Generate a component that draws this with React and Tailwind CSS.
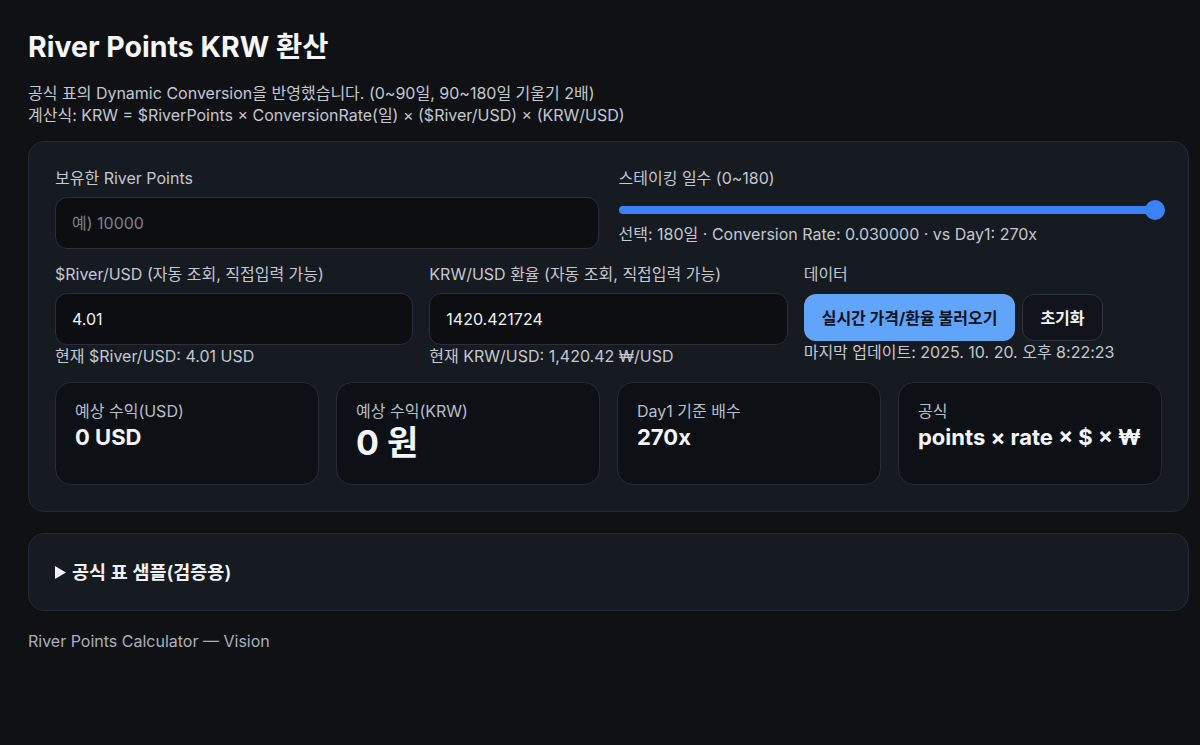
import React, { useState } from "react";

const FONT = { fontFamily: 'Inter, "Noto Sans CJK KR", "Noto Sans", sans-serif' };

function Stat({ label, value, big }) {
  return (
    <div className="h-[103px] rounded-2xl border border-[#262b35] bg-[#0d1015] px-[19px] pt-[18px]">
      <div className="text-[16px] leading-5 text-[#b9bfc9]">{label}</div>
      <div className={big ? "mt-[2px] text-[34px] font-bold leading-[40px] text-[#f3f5f8]" : "mt-[2px] text-[22px] font-bold leading-7 text-[#f3f5f8]"}>
        {value}
      </div>
    </div>
  );
}

export default function App() {
  const [points, setPoints] = useState("");
  const [river, setRiver] = useState("4.01");
  const [krw, setKrw] = useState("1420.421724");

  return (
    <div style={FONT} className="min-h-[745px] bg-[#0f1115] pl-7 pr-[11px] pt-[29px] text-[#e6e8ec]">
      <h1 className="text-[28.5px] font-bold leading-9 text-[#f4f6f8]">River Points KRW 환산</h1>
      <p className="mt-[17px] text-[16px] leading-[22px] text-[#c3c8d1]">
        공식 표의 Dynamic Conversion을 반영했습니다. (0~90일, 90~180일 기울기 2배)
        <br />
        계산식: KRW = $RiverPoints × ConversionRate(일) × ($River/USD) × (KRW/USD)
      </p>

      <div className="mt-[15px] rounded-2xl border border-[#232833] bg-[#161a21] px-[26px] pt-[26px] pb-[26px]">
        <div className="grid grid-cols-2 gap-5">
          <div>
            <label className="block text-[16px] leading-5 text-[#c3c8d1]">보유한 River Points</label>
            <input
              value={points}
              onChange={(e) => setPoints(e.target.value)}
              placeholder="예) 10000"
              className="mt-[9px] h-[52px] w-full rounded-xl border border-[#2a2f39] bg-[#0c0e12] px-4 text-[16px] text-[#e6e8ec] outline-none placeholder:text-[#7b818b]"
            />
          </div>
          <div>
            <label className="block text-[16px] leading-5 text-[#c3c8d1]">스테이킹 일수 (0~180)</label>
            <div className="relative -mr-[3px] mt-[11px] h-[22px]">
              <div className="absolute left-0 right-[1px] top-[7px] h-2 rounded-full bg-[#3b82f6]" />
              <div className="absolute right-0 top-[1px] h-5 w-5 rounded-full bg-[#3b82f6]" />
            </div>
            <div className="mt-[3px] text-[16px] leading-5 text-[#c3c8d1]">
              선택: 180일 · Conversion Rate: 0.030000 · vs Day1: 270x
            </div>
          </div>
        </div>

        <div className="mt-[15px] grid grid-cols-3 gap-4">
          <div>
            <label className="block text-[16px] leading-5 text-[#c3c8d1]">$River/USD (자동 조회, 직접입력 가능)</label>
            <input
              value={river}
              onChange={(e) => setRiver(e.target.value)}
              className="mt-[9px] h-[52px] w-full rounded-xl border border-[#2a2f39] bg-[#0c0e12] px-4 text-[16px] text-[#f0f2f5] outline-none"
            />
            <div className="mt-[1px] text-[16px] leading-5 text-[#c3c8d1]">현재 $River/USD: 4.01 USD</div>
          </div>
          <div>
            <label className="block text-[16px] leading-5 text-[#c3c8d1]">KRW/USD 환율 (자동 조회, 직접입력 가능)</label>
            <input
              value={krw}
              onChange={(e) => setKrw(e.target.value)}
              className="mt-[9px] h-[52px] w-full rounded-xl border border-[#2a2f39] bg-[#0c0e12] px-4 text-[16px] text-[#f0f2f5] outline-none"
            />
            <div className="mt-[1px] text-[16px] leading-5 text-[#c3c8d1]">현재 KRW/USD: 1,420.42 ₩/USD</div>
          </div>
          <div>
            <label className="block text-[16px] leading-5 text-[#c3c8d1]">데이터</label>
            <div className="mt-[10px] flex gap-[7px]">
              <button className="h-[47px] rounded-xl bg-[#60a5fa] px-[18px] text-[16px] font-bold text-[#0b1220]">
                실시간 가격/환율 불러오기
              </button>
              <button className="h-[47px] rounded-xl border border-[#2f3540] bg-[#11141a] px-[17px] text-[16px] font-bold text-[#f0f2f5]">
                초기화
              </button>
            </div>
            <div className="mt-[1px] text-[16px] leading-5 text-[#c3c8d1]">마지막 업데이트: 2025. 10. 20. 오후 8:22:23</div>
          </div>
        </div>

        <div className="mt-[16px] grid grid-cols-4 gap-[17px]">
          <Stat label="예상 수익(USD)" value="0 USD" />
          <Stat label="예상 수익(KRW)" value="0 원" big />
          <Stat label="Day1 기준 배수" value="270x" />
          <Stat label="공식" value="points × rate × $ × ₩" />
        </div>
      </div>

      <details className="mt-[21px] rounded-2xl border border-[#232833] bg-[#161a21] px-[26px] py-[24px]">
        <summary className="flex cursor-pointer list-none items-center gap-[6px] text-[18.5px] font-semibold leading-7 text-[#f0f2f5] [&::-webkit-details-marker]:hidden">
          <svg width="11" height="13" viewBox="0 0 11 13" className="shrink-0">
            <path d="M0 0 L11 6.5 L0 13 Z" fill="#f0f2f5" />
          </svg>
          공식 표 샘플(검증용)
        </summary>
      </details>

      <footer className="mt-[20px] text-[16px] leading-5 text-[#aab0ba]">River Points Calculator — Vision</footer>
    </div>
  );
}
